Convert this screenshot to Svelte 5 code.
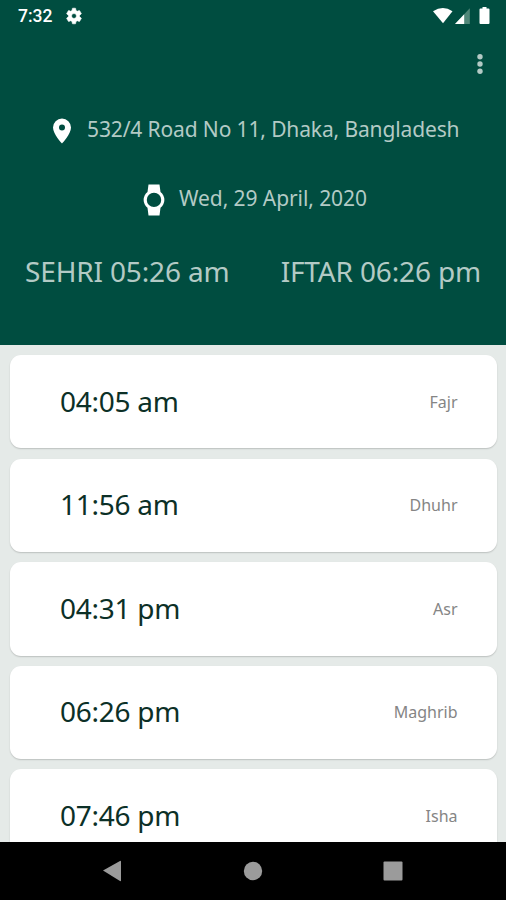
<script>
  const prayers = [
    { time: '04:05 am', name: 'Fajr' },
    { time: '11:56 am', name: 'Dhuhr' },
    { time: '04:31 pm', name: 'Asr' },
    { time: '06:26 pm', name: 'Maghrib' },
    { time: '07:46 pm', name: 'Isha' }
  ];
</script>

<div class="screen">
  <header>
    <div class="status">
      <span class="clock">7:32</span>
      <svg class="gear" width="18" height="18" viewBox="0 0 24 24"><path fill="#fff" stroke="#fff" stroke-width=".8" fill-rule="evenodd" d="M19.4 13a7.8 7.8 0 0 0 0-2l2.2-1.7a.5.5 0 0 0 .1-.6l-2.2-3.8a.5.5 0 0 0-.6-.2l-2.6 1a7.500 7.500 0 0 0-1.700-1l-.4-2.700a.5.5 0 0 0-.5-.4H10.300a.5.5 0 0 0-.5.4l-.4 2.700a7.500 7.500 0 0 0-1.700 1l-2.600-1a.5.5 0 0 0-.6.2L2.300 8.700a.5.5 0 0 0 .1.6L4.600 11a7.800 7.800 0 0 0 0 2l-2.200 1.700a.5.5 0 0 0-.1.6l2.200 3.800a.5.5 0 0 0 .6.2l2.600-1a7.500 7.500 0 0 0 1.700 1l.4 2.700a.5.5 0 0 0 .5.4h3.400a.5.5 0 0 0 .5-.4l.4-2.700a7.500 7.500 0 0 0 1.700-1l2.600 1a.5.5 0 0 0 .6-.2l2.200-3.800a.5.5 0 0 0-.1-.6zM12 15.300a3.300 3.300 0 1 1 0-6.600 3.300 3.300 0 0 1 0 6.600z" /></svg>
      <svg class="signals" width="60" height="20" viewBox="0 0 60 20">
        <path fill="#fff" d="M1 5.300Q11 -1.200 20.500 5.300L11 17.300z" />
        <path fill="#508779" d="M37.800 2.300V18H23z" />
        <path fill="#fff" d="M32.200 8.300V18H23z" />
        <path fill="#fff" d="M48.500 2.500h2V1h4v1.500h2q1 0 1 1V17q0 1-1 1h-8q-1 0-1-1V3.500q0-1 1-1z" />
      </svg>
    </div>
    <div class="toolbar">
      <svg width="8" height="24" viewBox="0 0 8 24" fill="#b3cac5"><circle cx="4" cy="4.700" r="2.700" /><circle cx="4" cy="12" r="2.700" /><circle cx="4" cy="19.300" r="2.700" /></svg>
    </div>
    <div class="info address">
      <svg width="20" height="26" viewBox="0 0 20 26"><path fill="#fff" fill-rule="evenodd" d="M10 .5a9 9 0 0 0-9 9C1 16 10 25.500 10 25.500S19 16 19 9.500a9 9 0 0 0-9-9zm0 6a3 3 0 1 1 0 6 3 3 0 0 1 0-6z" /></svg>
      <span>532/4 Road No 11, Dhaka, Bangladesh</span>
    </div>
    <div class="info date">
      <svg width="22" height="32" viewBox="0 0 22 32"><path fill="#fff" fill-rule="evenodd" d="M5.500 .5h11l1 7.500a10 10 0 0 1 0 15.800L16.500 31.500h-11l-1-7.700a10 10 0 0 1 0-15.800zM11 8.700a7.200 7.200 0 1 0 0 14.400 7.200 7.200 0 0 0 0-14.400z" /></svg>
      <span>Wed, 29 April, 2020</span>
    </div>
    <div class="fasting">
      <span>SEHRI 05:26 am</span>
      <span>IFTAR 06:26 pm</span>
    </div>
  </header>
  <main>
    {#each prayers as prayer}
      <div class="card">
        <span class="time">{prayer.time}</span>
        <span class="name">{prayer.name}</span>
      </div>
    {/each}
  </main>
  <nav>
    <svg width="20" height="22" viewBox="0 0 20 22"><path fill="#9b9b9b" d="M1 10.500 18 1q1-.5 1 .5v19q0 1-1 .5z" /></svg>
    <svg width="20" height="20" viewBox="0 0 20 20"><circle cx="10" cy="10" r="9.200" fill="#9b9b9b" /></svg>
    <svg width="20" height="20" viewBox="0 0 20 20"><rect x=".5" y=".5" width="19" height="19" rx="1" fill="#9b9b9b" /></svg>
  </nav>
</div>

<style>
  :global(body) { margin: 0; }
  .screen {
    width: 506px;
    height: 900px;
    display: flex;
    flex-direction: column;
    overflow: hidden;
    font-family: "Noto Sans", "Open Sans", sans-serif;
  }
  svg { display: block; flex: none; }
  span { white-space: nowrap; }
  header {
    flex: none;
    height: 345px;
    background: #004d40;
    color: #b3cac5;
  }
  .status {
    height: 32px;
    display: flex;
    align-items: center;
    padding: 0 14px 0 18px;
  }
  .clock {
    width: 47px;
    font: 500 17.500px/32px Roboto, sans-serif;
    color: #fff;
  }
  .signals { margin: -1px 0 0 auto; }
  .toolbar {
    height: 64px;
    display: flex;
    align-items: center;
    justify-content: flex-end;
    padding-right: 22px;
    box-sizing: border-box;
  }
  .info {
    display: flex;
    align-items: center;
    height: 69px;
    font-size: 21px;
  }
  .info span { padding-bottom: 3px; }
  .address { padding-left: 52px; gap: 15px; letter-spacing: -0.130px; }
  .date { padding-left: 143px; gap: 14px; letter-spacing: -0.080px; }
  .fasting {
    display: flex;
    justify-content: space-between;
    padding: 0 25px;
    font-size: 28px;
    line-height: 75px;
    letter-spacing: -0.150px;
  }
  main {
    flex: 1;
    min-height: 0;
    overflow: hidden;
    display: flex;
    flex-direction: column;
    gap: 10.200px;
    padding: 10px 9px 0 10px;
    background: #e5eae8;
  }
  .card {
    flex: none;
    height: 93.400px;
    box-sizing: border-box;
    padding: 0 39.500px 0 50px;
    display: flex;
    align-items: center;
    justify-content: space-between;
    border-radius: 11px;
    background: #fff;
    box-shadow: 0 1px 1.500px rgba(0, 0, 0, 0.18);
  }
  .time { padding-bottom: 2px; font-size: 28px; letter-spacing: -0.250px; color: #0c3027; }
  .name { font-size: 16px; color: #858585; }
  nav {
    flex: none;
    height: 58px;
    display: flex;
    align-items: center;
    justify-content: space-between;
    padding: 0 103px 0 102px;
    box-sizing: border-box;
    background: #000;
  }
</style>
